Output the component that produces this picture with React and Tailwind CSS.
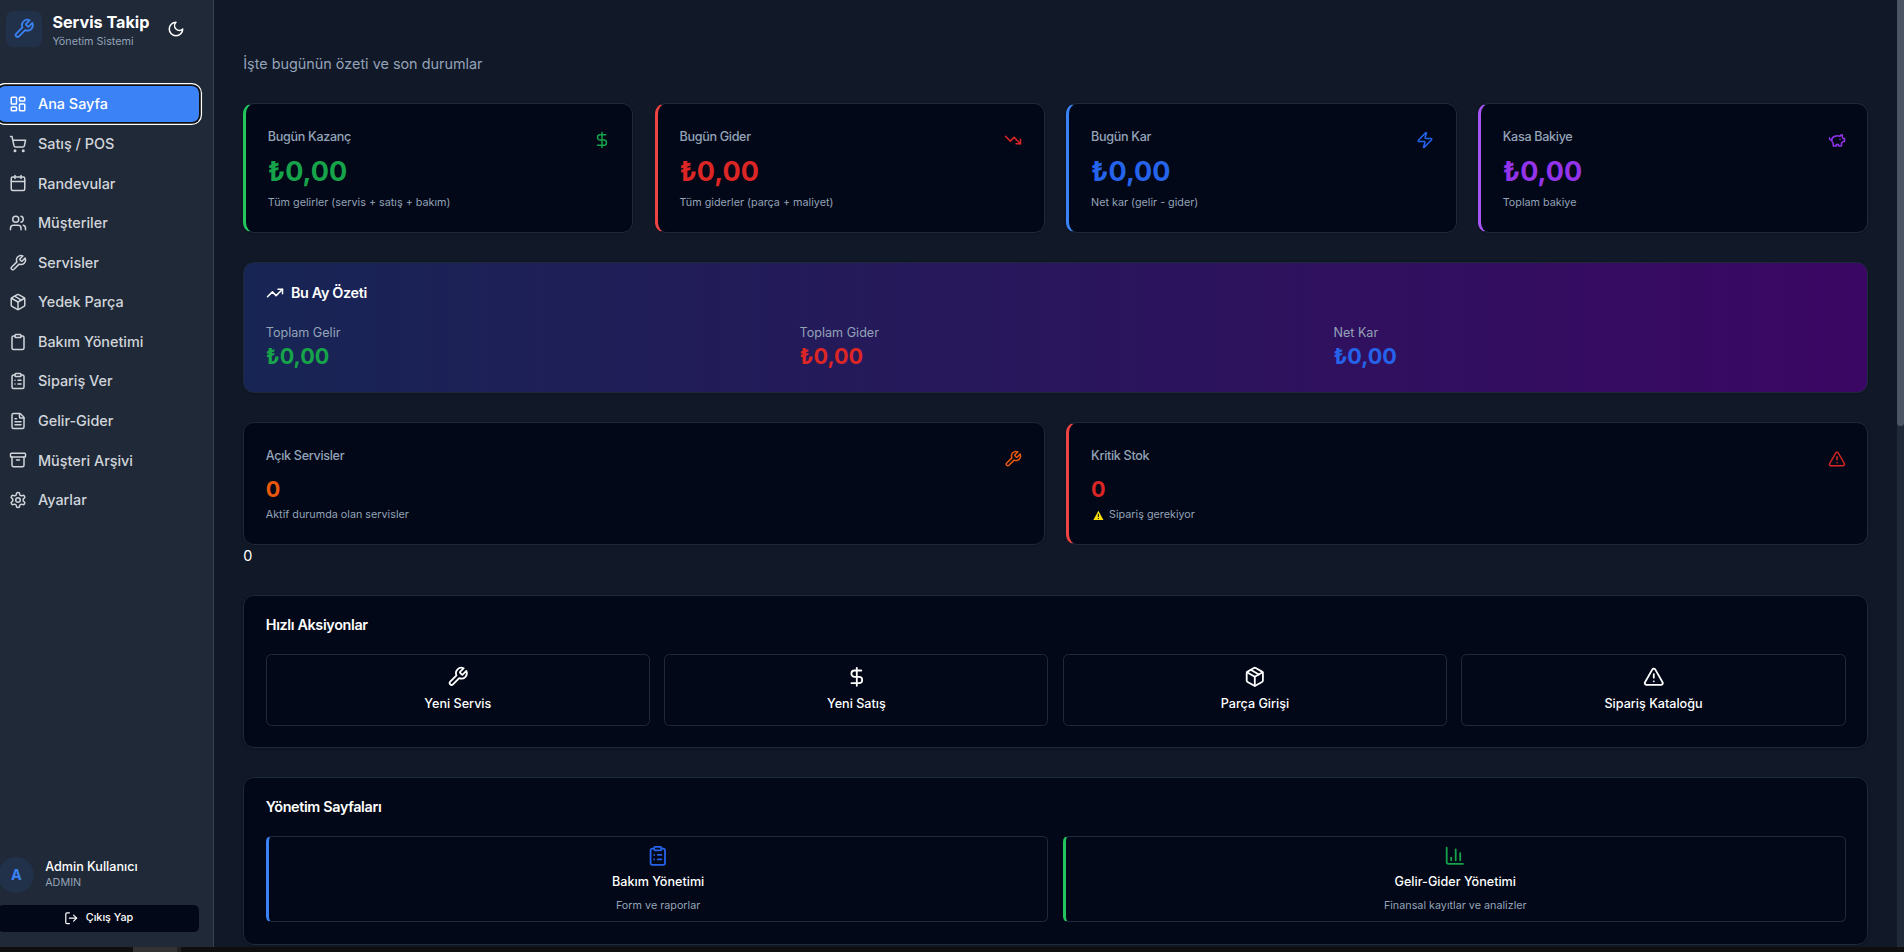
import React from "react";
import {
  Archive,
  Calendar,
  ChartColumn,
  Clipboard,
  ClipboardList,
  DollarSign,
  FileText,
  LayoutDashboard,
  LogOut,
  Package,
  ShoppingCart,
  TrendingDown,
  TrendingUp,
  TriangleAlert,
  Users,
  Zap,
} from "lucide-react";

const StrokeIcon = ({ className, children }) => (
  <svg
    viewBox="0 0 24 24"
    fill="none"
    stroke="currentColor"
    strokeWidth="2"
    strokeLinecap="round"
    strokeLinejoin="round"
    className={className}
  >
    {children}
  </svg>
);

const Wrench = ({ className }) => (
  <StrokeIcon className={className}>
    <path d="M14.7 6.3a1 1 0 0 0 0 1.4l1.6 1.6a1 1 0 0 0 1.4 0l3.77-3.77a6 6 0 0 1-7.94 7.94l-6.91 6.91a2.12 2.12 0 0 1-3-3l6.91-6.91a6 6 0 0 1 7.94-7.94l-3.76 3.76z" />
  </StrokeIcon>
);

const Moon = ({ className }) => (
  <StrokeIcon className={className}>
    <path d="M12 3a6 6 0 0 0 9 9 9 9 0 1 1-9-9Z" />
  </StrokeIcon>
);

const PiggyBank = ({ className }) => (
  <StrokeIcon className={className}>
    <path d="M19 5c-1.5 0-2.8 1.4-3 2-3.5-1.5-11-.3-11 5 0 1.8 0 3 2 4.5V20h4v-2h3v2h4v-4c1-.5 1.7-1 2-2h2v-4h-2c0-1-.5-1.5-1-2V5z" />
    <path d="M2 9v1c0 1.1.9 2 2 2h1" />
    <path d="M16 11h.01" />
  </StrokeIcon>
);

const Settings = ({ className }) => (
  <StrokeIcon className={className}>
    <path d="M12.22 2h-.44a2 2 0 0 0-2 2v.18a2 2 0 0 1-1 1.73l-.43.25a2 2 0 0 1-2 0l-.15-.08a2 2 0 0 0-2.73.73l-.22.38a2 2 0 0 0 .73 2.73l.15.1a2 2 0 0 1 1 1.72v.51a2 2 0 0 1-1 1.74l-.15.09a2 2 0 0 0-.73 2.73l.22.38a2 2 0 0 0 2.73.73l.15-.08a2 2 0 0 1 2 0l.43.25a2 2 0 0 1 1 1.73V20a2 2 0 0 0 2 2h.44a2 2 0 0 0 2-2v-.18a2 2 0 0 1 1-1.73l.43-.25a2 2 0 0 1 2 0l.15.08a2 2 0 0 0 2.73-.73l.22-.39a2 2 0 0 0-.73-2.73l-.15-.08a2 2 0 0 1-1-1.74v-.5a2 2 0 0 1 1-1.74l.15-.09a2 2 0 0 0 .73-2.73l-.22-.38a2 2 0 0 0-2.73-.73l-.15.08a2 2 0 0 1-2 0l-.43-.25a2 2 0 0 1-1-1.73V4a2 2 0 0 0-2-2z" />
    <circle cx="12" cy="12" r="3" />
  </StrokeIcon>
);

const navItems = [
  { label: "Ana Sayfa", icon: LayoutDashboard, active: true },
  { label: "Satış / POS", icon: ShoppingCart },
  { label: "Randevular", icon: Calendar },
  { label: "Müşteriler", icon: Users },
  { label: "Servisler", icon: Wrench },
  { label: "Yedek Parça", icon: Package },
  { label: "Bakım Yönetimi", icon: Clipboard },
  { label: "Sipariş Ver", icon: ClipboardList },
  { label: "Gelir-Gider", icon: FileText },
  { label: "Müşteri Arşivi", icon: Archive },
  { label: "Ayarlar", icon: Settings },
];

const todayStats = [
  {
    title: "Bugün Kazanç",
    note: "Tüm gelirler (servis + satış + bakım)",
    icon: DollarSign,
    border: "border-l-[#22c55e]",
    color: "text-[#16a34a]",
  },
  {
    title: "Bugün Gider",
    note: "Tüm giderler (parça + maliyet)",
    icon: TrendingDown,
    border: "border-l-[#ef4444]",
    color: "text-[#dc2626]",
  },
  {
    title: "Bugün Kar",
    note: "Net kar (gelir - gider)",
    icon: Zap,
    border: "border-l-[#3b82f6]",
    color: "text-[#2563eb]",
  },
  {
    title: "Kasa Bakiye",
    note: "Toplam bakiye",
    icon: PiggyBank,
    border: "border-l-[#a855f7]",
    color: "text-[#9333ea]",
  },
];

const monthStats = [
  { label: "Toplam Gelir", color: "text-[#16a34a]" },
  { label: "Toplam Gider", color: "text-[#dc2626]" },
  { label: "Net Kar", color: "text-[#2563eb]" },
];

const quickActions = [
  { label: "Yeni Servis", icon: Wrench },
  { label: "Yeni Satış", icon: DollarSign },
  { label: "Parça Girişi", icon: Package },
  { label: "Sipariş Kataloğu", icon: TriangleAlert },
];

const managementPages = [
  {
    label: "Bakım Yönetimi",
    note: "Form ve raporlar",
    icon: ClipboardList,
    border: "border-l-[#3b82f6]",
    color: "text-[#2563eb]",
  },
  {
    label: "Gelir-Gider Yönetimi",
    note: "Finansal kayıtlar ve analizler",
    icon: ChartColumn,
    border: "border-l-[#22c55e]",
    color: "text-[#16a34a]",
  },
];

const Card = ({ className = "", children }) => (
  <div className={`rounded-xl border border-[#1e293b] p-6 shadow-sm ${className}`}>{children}</div>
);

const CardHeader = ({ title, icon: Icon, color }) => (
  <div className="flex h-[34px] items-start justify-between">
    <h3 className="mt-[3px] text-sm font-medium tracking-tight text-[#94a3b8]">{title}</h3>
    <Icon className={`mt-[6.5px] h-5 w-5 ${color}`} />
  </div>
);

const WarningSign = () => (
  <svg viewBox="0 0 16 16" className="mx-[2px] mt-px h-3 w-3">
    <path d="M8 1 15.5 15H.5Z" fill="#fde00a" />
    <path d="M8 5.5v5M8 11.8v1.6" stroke="#222" strokeWidth="1.7" />
  </svg>
);

const Sidebar = () => (
  <aside className="-ml-[17.8px] flex w-64 shrink-0 flex-col border-r border-[#374151] bg-[#1f2937]">
    <div className="flex items-start pl-6 pt-3">
      <div className="flex h-10 w-10 items-center justify-center rounded-lg bg-[#3b82f6]/10">
        <Wrench className="h-6 w-6 text-[#3b82f6]" />
      </div>
      <div className="-mt-[0.7px] ml-3 w-[127px]">
        <h1 className="whitespace-nowrap text-lg font-bold leading-7 text-white">Servis Takip</h1>
        <p className="text-xs text-[#94a3b8]">Yönetim Sistemi</p>
      </div>
      <Moon className="mt-[10.6px] h-5 w-5 text-white" />
    </div>

    <nav className="mt-[40.4px] flex flex-1 flex-col gap-1 px-4">
      {navItems.map(({ label, icon: Icon, active }) => (
        <a
          key={label}
          className={`flex h-10 items-center gap-3 rounded-lg px-3 text-base font-medium ${
            active
              ? "bg-[#3b82f6] text-white shadow-[0_0_0_2px_#101010,0_0_0_3.4px_#ffffff]"
              : "text-[#d1d5db]"
          }`}
        >
          <Icon className="h-5 w-5" />
          <span>{label}</span>
        </a>
      ))}
    </nav>

    <div className="px-4 pb-[17px]">
      <div className="flex items-center gap-3">
        <div className="flex h-10 w-10 items-center justify-center rounded-full bg-[#3b82f6]/10 font-bold text-[#3b82f6]">
          A
        </div>
        <div>
          <p className="text-sm font-medium leading-[18.8px] text-white">Admin Kullanıcı</p>
          <p className="text-xs text-[#94a3b8]">ADMIN</p>
        </div>
      </div>
      <button className="mt-[13px] flex h-[30px] w-full items-center justify-center gap-2 rounded-md bg-[#020817] text-xs font-medium text-white">
        <LogOut className="h-4 w-4" />
        Çıkış Yap
      </button>
    </div>
  </aside>
);

const Dashboard = () => (
  <main className="min-w-0 flex-1 overflow-hidden bg-[#111827] px-8 pt-[59px]">
    <p className="text-[#94a3b8]">İşte bugünün özeti ve son durumlar</p>

    <div className="mt-[31px] grid grid-cols-4 gap-6">
      {todayStats.map((s) => (
        <Card key={s.title} className={`border-l-4 bg-[#020817] ${s.border}`}>
          <CardHeader title={s.title} icon={s.icon} color={s.color} />
          <div className={`text-3xl font-bold ${s.color}`}>₺0,00</div>
          <p className="mt-[8.8px] text-xs text-[#94a3b8]">{s.note}</p>
        </Card>
      ))}
    </div>

    <Card className="mt-8 bg-linear-to-r/srgb from-[#172554] to-[#3b0764]">
      <h3 className="flex h-[19.6px] items-center gap-2 font-semibold tracking-tight text-white">
        <TrendingUp className="h-5 w-5" />
        Bu Ay Özeti
      </h3>
      <div className="mt-6 grid grid-cols-3 gap-6">
        {monthStats.map((s) => (
          <div key={s.label}>
            <p className="text-sm text-[#94a3b8]">{s.label}</p>
            <p className={`text-2xl font-bold ${s.color}`}>₺0,00</p>
          </div>
        ))}
      </div>
    </Card>

    <div className="mt-8 grid grid-cols-2 gap-6">
      <Card className="bg-[#020817]">
        <CardHeader title="Açık Servisler" icon={Wrench} color="text-[#ea580c]" />
        <div className="text-2xl font-bold text-[#ea580c]">0</div>
        <p className="mt-[4.8px] text-xs text-[#94a3b8]">Aktif durumda olan servisler</p>
      </Card>
      <Card className="border-l-4 border-l-[#ef4444] bg-[#020817]">
        <CardHeader title="Kritik Stok" icon={TriangleAlert} color="text-[#dc2626]" />
        <div className="text-2xl font-bold text-[#dc2626]">0</div>
        <p className="mt-[4.8px] flex items-center gap-1 text-xs text-[#94a3b8]">
          <WarningSign />
          Sipariş gerekiyor
        </p>
      </Card>
    </div>
    <div className="text-white">0</div>

    <Card className="mt-[31.5px] bg-[#020817]">
      <h3 className="font-semibold leading-none tracking-tight text-white">Hızlı Aksiyonlar</h3>
      <div className="mt-6 grid grid-cols-4 gap-4">
        {quickActions.map(({ label, icon: Icon }) => (
          <button
            key={label}
            className="flex h-20 flex-col items-center justify-center gap-2 rounded-md border border-[#1e293b] text-sm font-medium text-white"
          >
            <Icon className="h-6 w-6" />
            {label}
          </button>
        ))}
      </div>
    </Card>

    <Card className="mt-8 bg-[#020817]">
      <h3 className="font-semibold leading-none tracking-tight text-white">Yönetim Sayfaları</h3>
      <div className="mt-6 grid grid-cols-2 gap-4">
        {managementPages.map(({ label, note, icon: Icon, border, color }) => (
          <button
            key={label}
            className={`flex h-24 flex-col items-center justify-center gap-2 rounded-md border border-l-4 border-[#1e293b] text-sm font-medium text-white ${border}`}
          >
            <Icon className={`h-6 w-6 ${color}`} />
            {label}
            <span className="text-xs font-normal text-[#94a3b8]">{note}</span>
          </button>
        ))}
      </div>
    </Card>
  </main>
);

export default function App() {
  return (
    <div className="flex h-[952px] w-[1904px] flex-col overflow-hidden bg-[#111827] font-['Inter',sans-serif]">
      <div className="flex h-[947px]">
        <div className="flex min-w-0 flex-1 overflow-hidden [zoom:0.9]">
          <Sidebar />
          <Dashboard />
        </div>
        {/* Scrollbar */}
        <div className="w-[7px] bg-[#1f2937]">
          <div className="h-[426px] rounded-b-full bg-[#4b5563]" />
        </div>
      </div>
      <div className="flex h-[5px] bg-[#0f0f0f]">
        <div className="ml-[133px] w-[44px] bg-[#333333]" />
        <div className="w-[4px] bg-[#222222]" />
      </div>
    </div>
  );
}
